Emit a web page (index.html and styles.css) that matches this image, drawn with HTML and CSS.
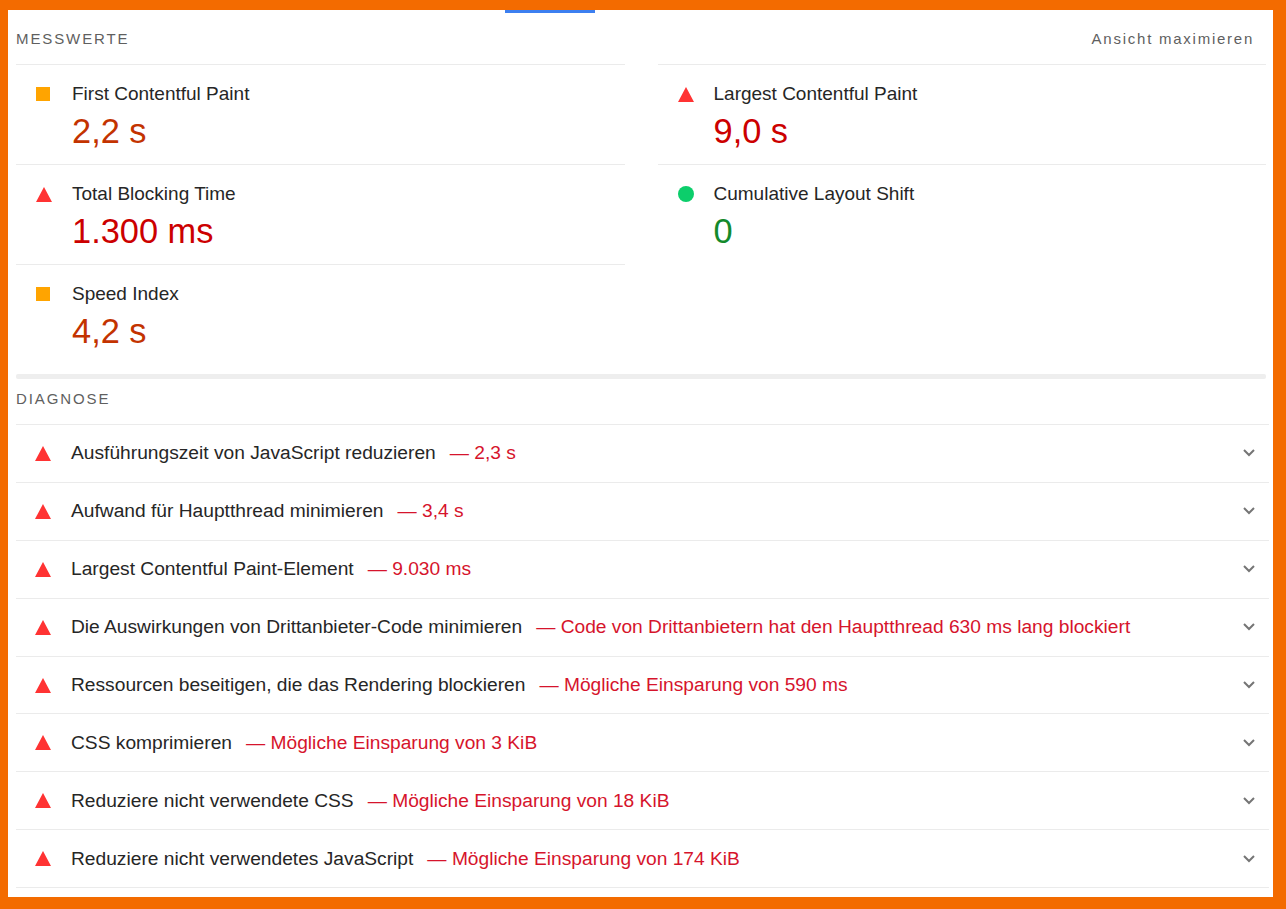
FILE: index.html
```html
<!DOCTYPE html>
<html lang="de">

<head>
    <meta charset="UTF-8">
    <meta name="viewport" content="width=device-width, initial-scale=1.0">
    <title>Lighthouse Bericht</title>
    <link rel="stylesheet" href="styles.css">
</head>

<body>
    <div class="report">
        <div class="tab-indicator"></div>

        <div class="content">
            <!-- Messwerte -->
            <div class="group-header">
                <span class="group-title">Messwerte</span>
                <span class="toggle">Ansicht maximieren</span>
            </div>

            <div class="metrics">
                <div class="metric">
                    <span class="icon"><span class="icon-average"></span></span>
                    <div>
                        <div class="metric-title">First Contentful Paint</div>
                        <div class="metric-value average">2,2&nbsp;s</div>
                    </div>
                </div>
                <div class="metric">
                    <span class="icon">
                        <svg width="16" height="15" viewBox="0 0 16 15"><polygon points="8,0 16,15 0,15" fill="#ff3333"/></svg>
                    </span>
                    <div>
                        <div class="metric-title">Largest Contentful Paint</div>
                        <div class="metric-value fail">9,0&nbsp;s</div>
                    </div>
                </div>
                <div class="metric">
                    <span class="icon">
                        <svg width="16" height="15" viewBox="0 0 16 15"><polygon points="8,0 16,15 0,15" fill="#ff3333"/></svg>
                    </span>
                    <div>
                        <div class="metric-title">Total Blocking Time</div>
                        <div class="metric-value fail">1.300&nbsp;ms</div>
                    </div>
                </div>
                <div class="metric">
                    <span class="icon"><span class="icon-pass"></span></span>
                    <div>
                        <div class="metric-title">Cumulative Layout Shift</div>
                        <div class="metric-value pass">0</div>
                    </div>
                </div>
                <div class="metric">
                    <span class="icon"><span class="icon-average"></span></span>
                    <div>
                        <div class="metric-title">Speed Index</div>
                        <div class="metric-value average">4,2&nbsp;s</div>
                    </div>
                </div>
            </div>

            <div class="group-sep"></div>

            <!-- Diagnose -->
            <div class="group-header diag-header">
                <span class="group-title">Diagnose</span>
            </div>

            <div class="audits">
                <div class="audit">
                    <svg class="audit-icon" width="16" height="15" viewBox="0 0 16 15"><polygon points="8,0 16,15 0,15" fill="#ff3333"/></svg>
                    <span class="audit-title">Ausführungszeit von JavaScript reduzieren<span class="display-text">— 2,3&nbsp;s</span></span>
                    <svg class="chevron" width="12" height="8" viewBox="0 0 12 8"><polyline points="1,1 6,6 11,1"/></svg>
                </div>
                <div class="audit">
                    <svg class="audit-icon" width="16" height="15" viewBox="0 0 16 15"><polygon points="8,0 16,15 0,15" fill="#ff3333"/></svg>
                    <span class="audit-title">Aufwand für Hauptthread minimieren<span class="display-text">— 3,4&nbsp;s</span></span>
                    <svg class="chevron" width="12" height="8" viewBox="0 0 12 8"><polyline points="1,1 6,6 11,1"/></svg>
                </div>
                <div class="audit">
                    <svg class="audit-icon" width="16" height="15" viewBox="0 0 16 15"><polygon points="8,0 16,15 0,15" fill="#ff3333"/></svg>
                    <span class="audit-title">Largest Contentful Paint-Element<span class="display-text">— 9.030&nbsp;ms</span></span>
                    <svg class="chevron" width="12" height="8" viewBox="0 0 12 8"><polyline points="1,1 6,6 11,1"/></svg>
                </div>
                <div class="audit">
                    <svg class="audit-icon" width="16" height="15" viewBox="0 0 16 15"><polygon points="8,0 16,15 0,15" fill="#ff3333"/></svg>
                    <span class="audit-title">Die Auswirkungen von Drittanbieter-Code minimieren<span class="display-text">— Code von Drittanbietern hat den Hauptthread 630&nbsp;ms lang blockiert</span></span>
                    <svg class="chevron" width="12" height="8" viewBox="0 0 12 8"><polyline points="1,1 6,6 11,1"/></svg>
                </div>
                <div class="audit">
                    <svg class="audit-icon" width="16" height="15" viewBox="0 0 16 15"><polygon points="8,0 16,15 0,15" fill="#ff3333"/></svg>
                    <span class="audit-title">Ressourcen beseitigen, die das Rendering blockieren<span class="display-text">— Mögliche Einsparung von 590&nbsp;ms</span></span>
                    <svg class="chevron" width="12" height="8" viewBox="0 0 12 8"><polyline points="1,1 6,6 11,1"/></svg>
                </div>
                <div class="audit">
                    <svg class="audit-icon" width="16" height="15" viewBox="0 0 16 15"><polygon points="8,0 16,15 0,15" fill="#ff3333"/></svg>
                    <span class="audit-title">CSS komprimieren<span class="display-text">— Mögliche Einsparung von 3&nbsp;KiB</span></span>
                    <svg class="chevron" width="12" height="8" viewBox="0 0 12 8"><polyline points="1,1 6,6 11,1"/></svg>
                </div>
                <div class="audit">
                    <svg class="audit-icon" width="16" height="15" viewBox="0 0 16 15"><polygon points="8,0 16,15 0,15" fill="#ff3333"/></svg>
                    <span class="audit-title">Reduziere nicht verwendete CSS<span class="display-text">— Mögliche Einsparung von 18&nbsp;KiB</span></span>
                    <svg class="chevron" width="12" height="8" viewBox="0 0 12 8"><polyline points="1,1 6,6 11,1"/></svg>
                </div>
                <div class="audit">
                    <svg class="audit-icon" width="16" height="15" viewBox="0 0 16 15"><polygon points="8,0 16,15 0,15" fill="#ff3333"/></svg>
                    <span class="audit-title">Reduziere nicht verwendetes JavaScript<span class="display-text">— Mögliche Einsparung von 174&nbsp;KiB</span></span>
                    <svg class="chevron" width="12" height="8" viewBox="0 0 12 8"><polyline points="1,1 6,6 11,1"/></svg>
                </div>
            </div>
        </div>
    </div>
</body>

</html>
```

FILE: styles.css
```css
body {
    margin: 0;
    background-color: #f36b00;
    font-family: "Liberation Sans", Arial, Helvetica, sans-serif;
    color: #262626;
}

.report {
    margin: 10px 13px 12px 8px;
    height: 887px;
    background-color: #fff;
    overflow: hidden;
}

.tab-indicator {
    width: 90px;
    height: 3px;
    margin-left: 497px;
    background-color: #3c7ff0;
}

.content {
    padding: 0 7px 0 8px;
}

/* Gruppen-Kopf */
.group-header {
    display: flex;
    justify-content: space-between;
    align-items: center;
    height: 51px;
    padding-right: 12px;
}

.group-title {
    font-size: 15px;
    letter-spacing: 1.9px;
    text-transform: uppercase;
    color: #5f5f5f;
}

.toggle {
    font-size: 15px;
    letter-spacing: 1.75px;
    color: #5f5f5f;
}

/* Messwerte */
.metrics {
    display: grid;
    grid-template-columns: 1fr 1fr;
    column-gap: 33px;
}

.metric {
    display: grid;
    grid-template-columns: 36px 1fr;
    height: 100px;
    box-sizing: border-box;
    padding: 17px 0 0 20px;
    border-top: 1px solid #ebebeb;
}

.icon {
    display: flex;
    align-items: center;
    height: 24px;
}

.icon-average {
    width: 14px;
    height: 14px;
    background-color: #ffa400;
}

.icon-pass {
    width: 16px;
    height: 16px;
    border-radius: 50%;
    background-color: #0cce6b;
}

.metric-title {
    font-size: 19px;
    line-height: 24px;
}

.metric-value {
    margin-top: 5px;
    font-size: 34.4px;
    line-height: 40px;
}

.average {
    color: #c33300;
}

.fail {
    color: #cc0000;
}

.pass {
    color: #138a2c;
}

.group-sep {
    height: 5px;
    margin-top: 10px;
    border-radius: 2px;
    background-color: #eeeeee;
}

.diag-header {
    height: 45px;
    align-items: flex-start;
    padding-top: 10px;
    box-sizing: border-box;
    line-height: 20px;
}

/* Diagnose */
.audits {
    margin-right: -3px;
    border-bottom: 1px solid #ebebeb;
}

.audit {
    display: flex;
    align-items: center;
    height: 57.9px;
    box-sizing: border-box;
    padding: 0 14px 0 19px;
    border-top: 1px solid #ebebeb;
}

.audit-icon {
    flex: none;
    margin-right: 20px;
}

.audit-title {
    flex: 1;
    font-size: 19.2px;
    white-space: nowrap;
}

.display-text {
    margin-left: 14px;
    color: #d6142c;
}

.chevron {
    flex: none;
}

.chevron polyline {
    fill: none;
    stroke: #757575;
    stroke-width: 2;
}
```
